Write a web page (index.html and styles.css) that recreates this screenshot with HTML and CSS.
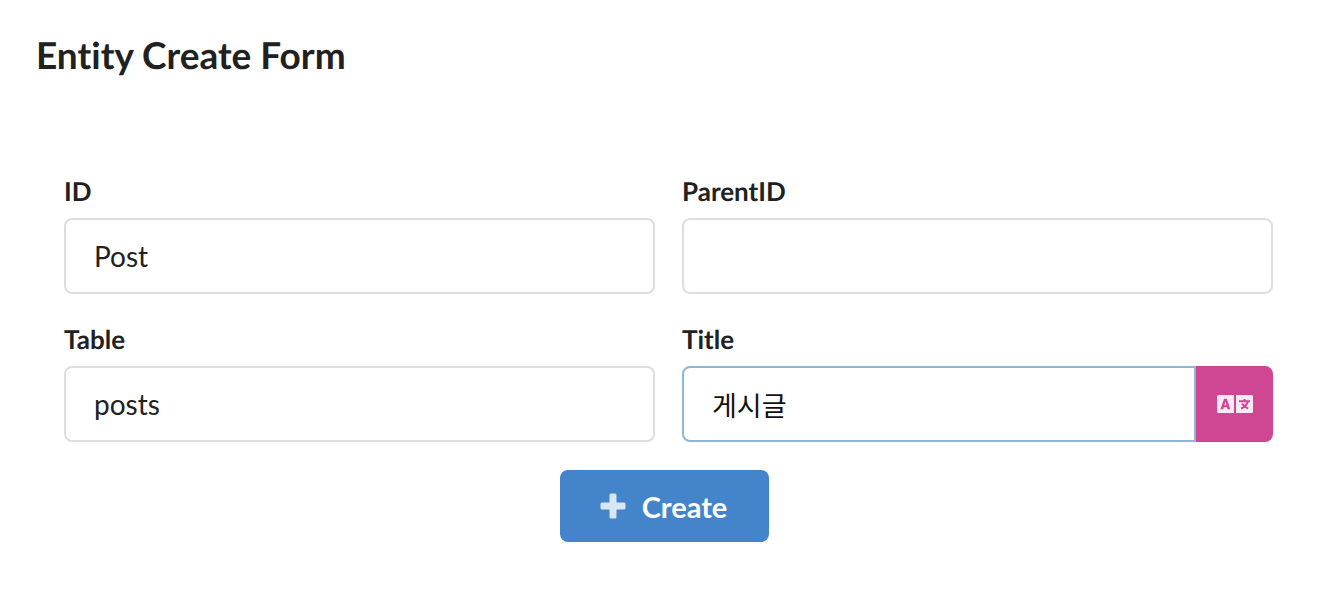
FILE: index.html
```html
<!DOCTYPE html>
<html lang="en">
<head>
<meta charset="utf-8">
<title>Entity Create Form</title>
<link rel="stylesheet" href="styles.css">
</head>
<body>
<main class="page">
  <h1 class="title">Entity Create Form</h1>
  <form class="form">
    <div class="fields">
      <div class="field">
        <label for="id">ID</label>
        <input id="id" type="text" value="Post">
      </div>
      <div class="field">
        <label for="parent">ParentID</label>
        <input id="parent" type="text">
      </div>
      <div class="field">
        <label for="table">Table</label>
        <input id="table" type="text" value="posts">
      </div>
      <div class="field">
        <label for="title">Title</label>
        <div class="action-input">
          <input id="title" class="focused" type="text" value="게시글" lang="ko">
          <button type="button" class="translate" aria-label="Translate">
            <svg viewBox="0 0 36 18" width="36" height="18" aria-hidden="true">
              <path fill="currentColor" fill-rule="evenodd" d="M1.500 0H17V18H1.500Q0 18 0 16.500V1.500Q0 0 1.500 0ZM7 3.800L3.500 14.200H6.200L6.800 12.200H10L10.600 14.200H13.300L9.800 3.800ZM8.400 6.600L9.400 10.200H7.400Z"/>
              <path fill="currentColor" d="M19 0H34.500Q36 0 36 1.500V16.500Q36 18 34.500 18H19Z"/>
              <path class="glyph" d="M22 6.200H33M27.500 4V6.200M30.800 6.500Q29.500 11.500 24 13.500M25 8.500Q27 12 31.200 13.500"/>
            </svg>
          </button>
        </div>
      </div>
    </div>
    <button type="button" class="create">
      <svg viewBox="0 0 26 26" width="26" height="26" aria-hidden="true"><path fill="currentColor" d="M11 .5H15Q16.500 .5 16.500 2V9.500H24Q25.500 9.500 25.500 11V15Q25.500 16.500 24 16.500H16.500V24Q16.500 25.500 15 25.500H11Q9.500 25.500 9.500 24V16.500H2Q.5 16.500 .5 15V11Q.5 9.500 2 9.500H9.500V2Q9.500 .5 11 .5Z"/></svg>
      <span>Create</span>
    </button>
  </form>
</main>
</body>
</html>
```
FILE: styles.css
```css
* { box-sizing: border-box; }
body {
  margin: 0;
  background: #fff;
  color: #212122;
  font-family: Lato, "Noto Sans CJK KR", sans-serif;
  font-variant-ligatures: none;
  text-rendering: geometricPrecision;
}
.page { padding: 31px 36px; }
.title {
  margin: 0;
  font-size: 37px;
  line-height: 48px;
  font-weight: 700;
}
.form {
  display: flex;
  flex-direction: column;
  align-items: center;
  gap: 28px;
  padding: 96px 29px 0 28px;
}
.fields {
  display: grid;
  grid-template-columns: 1fr 1fr;
  gap: 29px 27px;
  width: 100%;
}
.field label {
  display: block;
  margin-bottom: 11px;
  font-size: 26px;
  line-height: 32px;
  font-weight: 700;
}
.field input {
  display: block;
  width: 100%;
  min-width: 0;
  height: 76px;
  padding: 0 28px;
  border: 2px solid #dededf;
  border-radius: 8px;
  outline: 0;
  background: #fff;
  color: #212122;
  font: 28px Lato, sans-serif;
}
.action-input { display: flex; }
.field .focused {
  flex: 1;
  border-color: #8fb6d4;
  border-radius: 8px 0 0 8px;
  color: #111;
  font: 27px "Noto Sans CJK KR", sans-serif;
}
.translate {
  display: flex;
  align-items: center;
  justify-content: center;
  width: 77px;
  padding: 0;
  border: 0;
  border-radius: 0 8px 8px 0;
  background: #cf4693;
  color: #fbeaf4;
}
.glyph { fill: none; stroke: #cf4693; stroke-width: 2; }
.create {
  display: flex;
  align-items: center;
  gap: 16px;
  height: 72px;
  margin-right: 8px;
  padding: 0 42px 0 40px;
  border: 0;
  border-radius: 8px;
  background: #4384ca;
  color: #fff;
  font: 700 29px Lato, sans-serif;
}
.create svg { color: #d9e6f4; }
```
